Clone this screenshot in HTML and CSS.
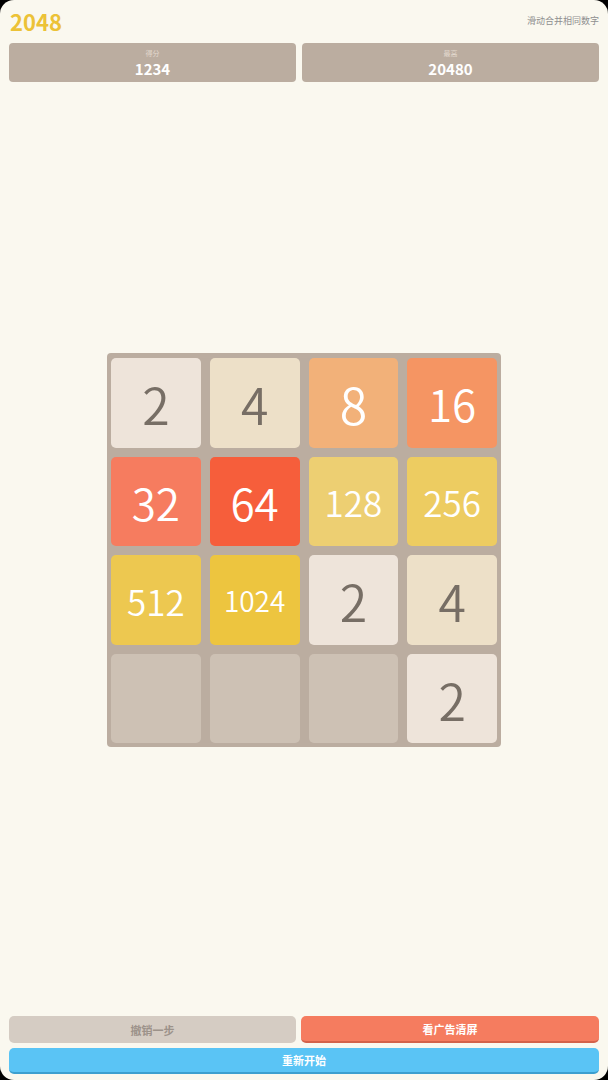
FILE: index.html
```html
<!DOCTYPE html>
<html lang="zh">
<head>
<meta charset="utf-8">
<title>2048</title>
<link rel="stylesheet" href="styles.css">
</head>
<body>
<div class="app">
  <header class="top">
    <div class="title-row">
      <h1 class="title">2048</h1>
      <span class="hint">滑动合并相同数字</span>
    </div>
    <div class="scores">
      <div class="score-box score-first">
        <span class="score-label">得分</span>
        <span class="score-value">1234</span>
      </div>
      <div class="score-box">
        <span class="score-label">最高</span>
        <span class="score-value">20480</span>
      </div>
    </div>
  </header>
  <main class="stage">
    <div class="board">
      <div class="tile t2">2</div>
      <div class="tile t4">4</div>
      <div class="tile t8">8</div>
      <div class="tile t16">16</div>
      <div class="tile t32">32</div>
      <div class="tile t64">64</div>
      <div class="tile t128">128</div>
      <div class="tile t256">256</div>
      <div class="tile t512">512</div>
      <div class="tile t1024">1024</div>
      <div class="tile t2">2</div>
      <div class="tile t4">4</div>
      <div class="tile empty"></div>
      <div class="tile empty"></div>
      <div class="tile empty"></div>
      <div class="tile t2">2</div>
    </div>
  </main>
  <footer class="actions">
    <div class="action-row">
      <button class="btn btn-undo">撤销一步</button>
      <button class="btn btn-ad">看广告清屏</button>
    </div>
    <button class="btn btn-restart">重新开始</button>
  </footer>
</div>
</body>
</html>
```
FILE: styles.css
```css
html {
  background: #000;
}
body {
  margin: 0;
  background: #000;
  font-family: "Noto Sans CJK SC", "Noto Sans", sans-serif;
}
.app {
  width: 608px;
  height: 1080px;
  background: #faf8ef;
  border-radius: 14px;
  display: flex;
  flex-direction: column;
  overflow: hidden;
}
.top {
  padding: 0 9px;
}
.title-row {
  height: 43px;
  display: flex;
  align-items: center;
  justify-content: space-between;
}
.title {
  margin: 0;
  margin-left: 1px;
  margin-top: -2px;
  font-size: 22px;
  font-weight: 700;
  color: #ecc237;
  line-height: 1;
}
.hint {
  font-size: 9px;
  color: #8f8f8f;
  margin-top: -3px;
}
.scores {
  display: flex;
  gap: 6px;
}
.score-box {
  flex: 1;
  height: 39px;
  background: #bbada0;
  border-radius: 4px;
  display: flex;
  flex-direction: column;
  align-items: center;
  justify-content: center;
}
.score-first {
  flex: 0 0 287px;
}
.score-label {
  font-size: 7px;
  line-height: 11px;
  color: #e2d8cd;
}
.score-value {
  font-size: 15px;
  line-height: 19px;
  font-weight: 700;
  color: #fff;
}
.stage {
  flex: 1;
  display: flex;
  align-items: center;
  justify-content: center;
}
.board {
  width: 386px;
  height: 385px;
  padding: 5px 4px 4px 4px;
  background: #bbada0;
  border-radius: 4px;
  display: grid;
  grid-template-columns: repeat(4, 1fr);
  grid-template-rows: repeat(4, 1fr);
  gap: 9px 9px;
  margin-top: 2px;
}
.tile {
  border-radius: 5px;
  display: flex;
  align-items: center;
  justify-content: center;
  font-size: 44px;
  font-weight: 350;
  line-height: 1;
  color: #fff;
  padding-top: 1px;
  box-sizing: border-box;
}
.empty { background: #cdc1b4; }
.t2 { background: #eee4da; color: #776e65; font-size: 50px; }
.t4 { background: #ede0c8; color: #776e65; font-size: 50px; }
.t8 { background: #f2b179; font-size: 50px; }
.t16 { background: #f59563; }
.t32 { background: #f67c5f; }
.t64 { background: #f65e3b; }
.t128 { background: #edcf72; font-size: 35px; }
.t256 { background: #edcc61; font-size: 35px; }
.t512 { background: #edc850; font-size: 35px; }
.t1024 { background: #edc53f; font-size: 28px; }
.actions {
  padding: 0 9px 6px 9px;
  display: flex;
  flex-direction: column;
  gap: 5px;
}
.action-row {
  display: flex;
  gap: 5px;
}
.btn {
  border: 0;
  margin: 0;
  padding: 0;
  height: 27px;
  border-radius: 5px;
  font-family: "Noto Sans CJK SC", "Noto Sans", sans-serif;
  font-size: 11px;
  font-weight: 700;
  color: #fff;
  box-sizing: border-box;
}
.action-row .btn {
  flex: 1;
}
.action-row .btn-undo {
  flex: 0 0 287px;
}
.btn-undo {
  background: #d5ccc3;
  color: #9c928a;
}
.btn-ad {
  background: #f57c5f;
  border-bottom: 2px solid #d4624a;
}
.btn-restart {
  width: 100%;
  height: 26px;
  background: #5ac4f5;
  border-bottom: 2px solid #3c9fcf;
}
```
